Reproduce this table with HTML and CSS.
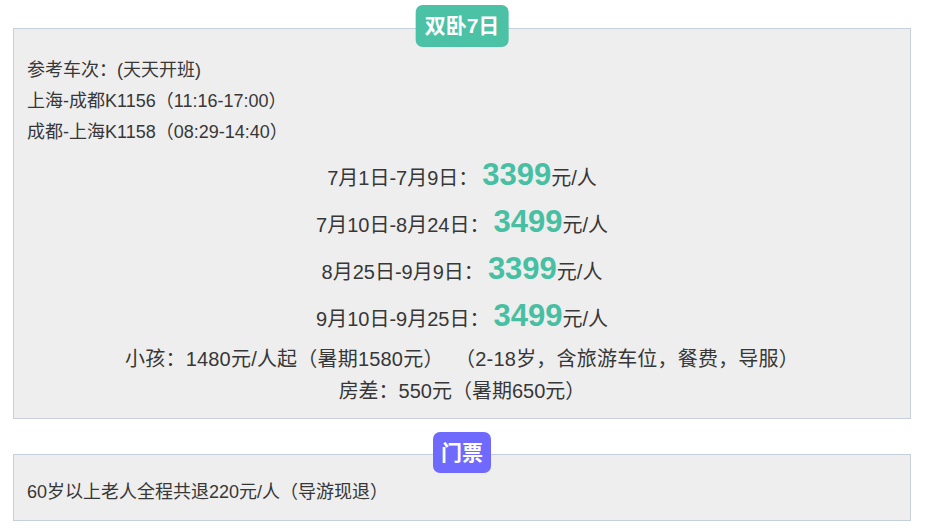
FILE: index.html
```html
<!DOCTYPE html>
<html lang="zh">
<head>
<meta charset="utf-8">
<title>双卧7日</title>
<link rel="stylesheet" href="styles.css">
</head>
<body>
<div class="page">
  <section class="card card-main">
    <div class="badge badge-green">双卧7日</div>
    <p class="line">参考车次：(天天开班)</p>
    <p class="line">上海-成都K1156（11:16-17:00）</p>
    <p class="line">成都-上海K1158（08:29-14:40）</p>
    <div class="prices">
      <p class="price">7月1日-7月9日：<span class="num">3399</span>元/人</p>
      <p class="price">7月10日-8月24日：<span class="num">3499</span>元/人</p>
      <p class="price">8月25日-9月9日：<span class="num">3399</span>元/人</p>
      <p class="price">9月10日-9月25日：<span class="num">3499</span>元/人</p>
    </div>
    <p class="note note-wide">小孩：1480元/人起（暑期1580元）&nbsp;&nbsp;（2-18岁，含旅游车位，餐费，导服）</p>
    <p class="note">房差：550元（暑期650元）</p>
  </section>
  <section class="card card-ticket">
    <div class="badge badge-purple">门票</div>
    <p class="line">60岁以上老人全程共退220元/人（导游现退）</p>
  </section>
</div>
</body>
</html>
```
FILE: styles.css
```css
html, body {
  margin: 0;
  padding: 0;
  background: #ffffff;
}
body {
  font-family: "Liberation Sans", "Noto Sans CJK SC", sans-serif;
  color: #373737;
}
.page {
  padding: 0 15px 0 13px;
}
.card {
  position: relative;
  background: #eeeeee;
  border: 1px solid #c6cfda;
}
.card-main {
  margin-top: 28px;
  padding: 26px 13px 11px 13px;
}
.card-ticket {
  margin-top: 35px;
  padding: 22px 13px 12px 13px;
}
.badge {
  position: absolute;
  left: 50%;
  transform: translateX(-50%);
  height: 42px;
  line-height: 42px;
  padding: 0 9px;
  border-radius: 7px;
  color: #ffffff;
  font-size: 21px;
  font-weight: bold;
  white-space: nowrap;
}
.badge-green {
  top: -24px;
  background: #4bc1a6;
}
.badge-purple {
  top: -23px;
  height: 41px;
  line-height: 41px;
  padding: 0 8px;
  background: #6f69fd;
}
p {
  margin: 0;
}
.line {
  font-size: 18px;
  line-height: 31px;
}
.prices {
  margin-top: 7px;
}
.price {
  text-align: center;
  font-size: 20px;
  line-height: 47px;
}
.num {
  margin-left: 4px;
  font-size: 31px;
  line-height: 1;
  font-weight: bold;
  color: #47bfa3;
}
.note {
  text-align: center;
  font-size: 20px;
  line-height: 32px;
}
.note-wide {
  letter-spacing: 0.2px;
}
```
